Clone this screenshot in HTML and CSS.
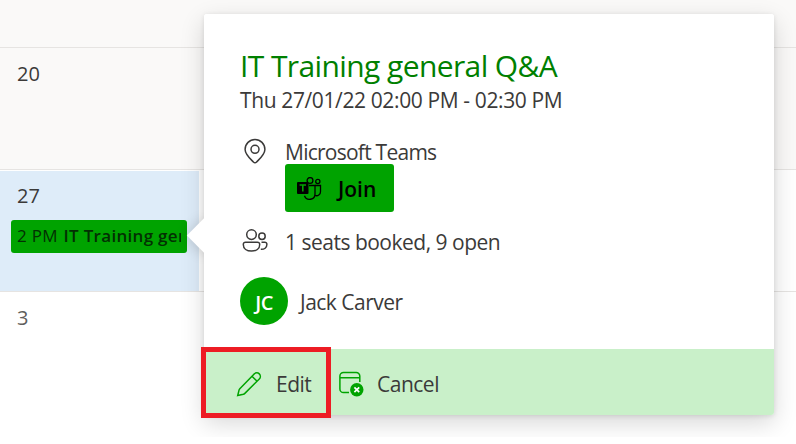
FILE: index.html
```html
<!DOCTYPE html>
<html lang="en">
<head>
<meta charset="UTF-8">
<title>Bookings Calendar</title>
<link rel="stylesheet" href="styles.css">
</head>
<body>

<div class="calendar">
    <div class="week past"></div>
    <div class="week past">
        <div class="day"><span class="date">20</span></div>
    </div>
    <div class="week">
        <div class="day selected">
            <span class="date">27</span>
            <div class="event"><span class="event-time">2 PM</span> <b>IT Training general Q&amp;A</b></div>
        </div>
    </div>
    <div class="week last">
        <div class="day next-month"><span class="date">3</span></div>
    </div>

    <!-- Event details popup -->
    <div class="callout">
        <div class="beak"></div>
        <div class="details">
            <h2 class="title">IT Training general Q&amp;A</h2>
            <div class="when">Thu 27/01/22 02:00 PM - 02:30 PM</div>

            <div class="row location">
                <svg class="icon" viewBox="0 0 26 26">
                    <path d="M13 1.5a9.9 9.9 0 0 1 9.9 9.9c0 4.7-4.3 8.6-8.3 12.6a2.3 2.3 0 0 1-3.2 0C7.4 20 3.1 16.1 3.1 11.4A9.9 9.9 0 0 1 13 1.5z"/>
                    <circle cx="13" cy="11.3" r="4"/>
                </svg>
                <div class="place">
                    <span class="place-name">Microsoft Teams</span>
                    <button class="join">
                        <svg class="teams" viewBox="0 0 26 24">
                            <circle cx="14" cy="3.5" r="2.9"/>
                            <circle cx="21.8" cy="4.5" r="2.1"/>
                            <path d="M13 8.5h6v8.2a5.4 5.4 0 0 1-10.500 2"/>
                            <path d="M19 8.5h5.500v6a4 4 0 0 1-5.500 3.9"/>
                            <path class="solid" d="M2 5h9.5a1 1 0 0 1 1 1v10a1 1 0 0 1-1 1H2a1 1 0 0 1-1-1V6a1 1 0 0 1 1-1z"/>
                            <path class="letter" d="M3.6 8h6.4M6.8 8v6.500"/>
                        </svg>
                        <span class="join-text">Join</span>
                    </button>
                </div>
            </div>

            <div class="row seats">
                <svg class="icon" viewBox="0 0 26 26">
                    <circle cx="9.5" cy="6.6" r="4.8"/>
                    <circle cx="20" cy="8.2" r="3.2"/>
                    <path d="M3.5 14.2h12a2.2 2.2 0 0 1 2.2 2.2c0 4.4-3.6 6.7-8.2 6.7s-8.2-2.3-8.2-6.7a2.2 2.2 0 0 1 2.2-2.2z"/>
                    <path d="M19.5 14.2h3.3a2.1 2.1 0 0 1 2.1 2.1c0 3.6-2.7 5.2-6.1 5"/>
                </svg>
                <span class="seats-text">1 seats booked, 9 open</span>
            </div>

            <div class="row person">
                <span class="avatar">JC</span>
                <span class="person-name">Jack Carver</span>
            </div>
        </div>

        <div class="actions">
            <div class="action edit">
                <svg class="icon" viewBox="0 0 26 26">
                    <path d="M18.2 2.9a3.6 3.6 0 0 1 5.1 5.1L8.6 22.6a3 3 0 0 1-1.2.7L1.7 24.6l1.4-5.7a3 3 0 0 1 .7-1.2zM16 5.2l5.1 5.1"/>
                </svg>
                <span class="edit-text">Edit</span>
            </div>
            <div class="action cancel">
                <svg class="icon" viewBox="0 0 26 26">
                    <path d="M11 21.5H5.5a3.6 3.6 0 0 1-3.6-3.6V5.1a3.6 3.6 0 0 1 3.6-3.6h12.7a3.6 3.6 0 0 1 3.6 3.6V11M1.9 6.7h19.9"/>
                    <circle class="solid" cx="18.8" cy="18.8" r="6.7"/>
                    <path class="cross" d="M16.4 16.4l4.8 4.8M21.2 16.4l-4.8 4.8"/>
                </svg>
                <span class="cancel-text">Cancel</span>
            </div>
        </div>
    </div>

    <div class="highlight"></div>
</div>

</body>
</html>
```

FILE: styles.css
```css
:root {
    --green: #00a300;
    --green-light: #c9f0c9;
    --text: #3b3a39;
}

* {
    margin: 0;
    padding: 0;
    box-sizing: border-box;
}

body {
    background: #fff;
    font-family: "Open Sans", "Noto Sans", sans-serif;
    font-size: 21px;
    letter-spacing: -0.5px;
    color: var(--text);
}

/* Calendar */
.calendar {
    position: relative;
    display: grid;
    grid-template-rows: 48px 122px 122px 145px;
    height: 437px;
    overflow: hidden;
}

.week {
    display: flex;
    border-bottom: 1px solid #e6e4e2;
}

.week.past {
    background: #faf9f8;
}

.week.last {
    border-bottom: none;
}

.day {
    width: 199px;
    padding: 12px 12px 0 11px;
}

.day.selected {
    margin-top: 1px;
    padding-top: 11px;
    background: #deecf9;
}

.date {
    display: block;
    height: 28px;
    padding-left: 6px;
    font-size: 20px;
    letter-spacing: 0;
    line-height: 28px;
}

.next-month .date {
    color: #605e5c;
}

.event {
    height: 33px;
    margin-top: 10px;
    padding-left: 6px;
    border-right: 6px solid var(--green);
    border-radius: 3px;
    background: var(--green);
    color: #033003;
    font-size: 17px;
    letter-spacing: 0.3px;
    line-height: 32px;
    white-space: nowrap;
    overflow: hidden;
}

.event-time {
    margin-right: 1px;
}

.event b {
    font-weight: 600;
}

/* Popup */
.callout {
    position: absolute;
    top: 14px;
    left: 204px;
    display: flex;
    flex-direction: column;
    width: 570px;
    height: 401px;
    border-radius: 3px;
    background: #fff;
    box-shadow: 0 8px 24px rgba(0, 0, 0, 0.16), 0 1px 5px rgba(0, 0, 0, 0.1);
}

.beak {
    position: absolute;
    top: 209px;
    left: -12px;
    width: 25px;
    height: 25px;
    transform: rotate(45deg);
    background: #fff;
    box-shadow: 0 2px 14px rgba(0, 0, 0, 0.16);
}

.details {
    position: relative;
    flex: 1;
    padding: 33px 36px 0;
    background: #fff;
    border-radius: 3px 3px 0 0;
}

.title {
    height: 38px;
    color: #008000;
    font-size: 30px;
    font-weight: 400;
    letter-spacing: -0.6px;
    line-height: 37px;
    white-space: nowrap;
}

.when {
    height: 28px;
    letter-spacing: -0.38px;
    line-height: 30px;
    white-space: nowrap;
}

.row {
    display: flex;
}

.icon {
    width: 26px;
    height: 26px;
    flex: none;
    fill: none;
    stroke: currentColor;
    stroke-width: 1.5;
}

.location {
    gap: 17px;
    margin-top: 25px;
    padding-left: 2px;
}

.place-name {
    display: block;
    height: 26px;
    letter-spacing: -0.75px;
    line-height: 28px;
}

.join {
    display: flex;
    align-items: center;
    gap: 16px;
    width: 109px;
    height: 48px;
    padding: 2px 0 0 11px;
    border: none;
    border-radius: 3px;
    background: var(--green);
    color: #000;
    font: 600 21px "Open Sans", "Noto Sans", sans-serif;
    letter-spacing: 0;
}

.teams {
    width: 26px;
    height: 24px;
    fill: none;
    stroke: #000;
    stroke-width: 1.3;
}

.teams .solid {
    fill: #000;
    stroke: none;
}

.teams .letter {
    stroke: var(--green);
    stroke-width: 1.6;
}

.seats {
    gap: 17px;
    margin-top: 16px;
    padding-left: 2px;
    line-height: 28px;
}

.person {
    align-items: center;
    gap: 12px;
    margin-top: 21px;
    line-height: 30px;
}

.person-name {
    padding-top: 2px;
}

.avatar {
    width: 48px;
    height: 48px;
    border-radius: 50%;
    background: var(--green);
    color: #fff;
    font-size: 20px;
    font-weight: 600;
    line-height: 51px;
    text-align: center;
}

.actions {
    position: relative;
    display: flex;
    gap: 25px;
    height: 66px;
    padding: 0 32px;
    border-radius: 0 0 3px 3px;
    background: var(--green-light);
}

.action {
    display: flex;
    align-items: center;
    gap: 13px;
    padding-top: 3px;
}

.edit {
    gap: 14px;
    width: 77px;
}

.action .icon {
    color: var(--green);
}

.action .solid {
    fill: var(--green);
    stroke: none;
}

.action .cross {
    stroke: #fff;
    stroke-width: 1.7;
}

/* Red box around the edit action */
.highlight {
    position: absolute;
    top: 347px;
    left: 201px;
    width: 130px;
    height: 71px;
    border: 5px solid #ed1c24;
}
```
